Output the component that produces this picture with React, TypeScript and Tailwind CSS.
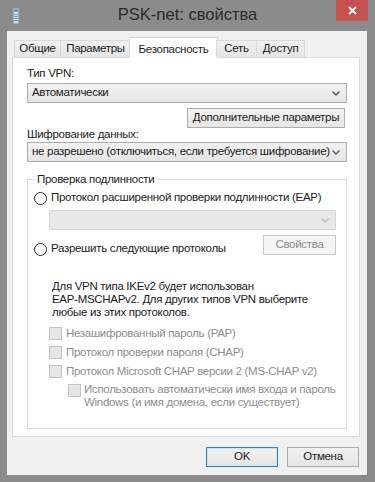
import type { ReactNode } from 'react'

const tabs = [
  { name: 'Общие', w: 'w-[47px]' },
  { name: 'Параметры', w: 'w-[71px]' },
  { name: 'Безопасность', w: 'w-[89px]' },
  { name: 'Сеть', w: 'w-[41px]' },
  { name: 'Доступ', w: 'w-[49px]' },
]

function Chevron({ muted = false }: { muted?: boolean }) {
  return (
    <svg width="8" height="5" viewBox="0 0 8 5" className="shrink-0">
      <path d="M0.5 0.5 L4 4 L7.5 0.5" fill="none" stroke={muted ? '#b8b8b8' : '#555'} strokeWidth="1.4" />
    </svg>
  )
}

function Combo({ children, className = '' }: { children?: ReactNode; className?: string }) {
  return (
    <div
      className={`h-[20px] min-w-0 flex items-center justify-between pl-[4px] pr-[6px] border border-[#acacac] bg-gradient-to-b from-[#f2f2f2] to-[#e5e5e5] ${className}`}
    >
      <span className="whitespace-nowrap overflow-hidden">{children}</span>
      <Chevron />
    </div>
  )
}

function Btn({ children, className = '' }: { children: ReactNode; className?: string }) {
  return (
    <div
      className={`h-[20px] flex items-center justify-center border bg-gradient-to-b from-[#f2f2f2] to-[#e5e5e5] whitespace-nowrap ${className}`}
    >
      {children}
    </div>
  )
}

function Radio() {
  return <div className="w-[13px] h-[13px] rounded-full border border-[#333] bg-white shrink-0" />
}

function Check() {
  return <div className="w-[13px] h-[13px] border border-[#c4c4c4] bg-[#e6e6e6] shrink-0" />
}

export default function App() {
  return (
    <div className="w-[375px] h-[482px] bg-[#8b8b8b] flex flex-col font-['Liberation_Sans',sans-serif] text-[11.5px] tracking-[-0.3px] text-[#1b1b1b]">
      {/* Title bar */}
      <div className="h-[31px] shrink-0 flex items-start">
        <svg width="6" height="16" viewBox="0 0 6 16" className="ml-[13px] mt-[8px]">
          <rect x="0" y="0" width="6" height="16" fill="#c9dcec" />
          <rect x="0.5" y="0.5" width="5" height="15" fill="none" stroke="#9ab3c9" />
          <rect x="1" y="1.5" width="4" height="2" fill="#5f7d98" />
          <rect x="1" y="6" width="4" height="1" fill="#7e9bb5" />
          <rect x="1" y="8" width="4" height="1" fill="#7e9bb5" />
          <rect x="1" y="10" width="4" height="1" fill="#7e9bb5" />
          <rect x="1" y="12" width="4" height="1" fill="#7e9bb5" />
        </svg>
        <div className="flex-1 text-center text-[16.5px] tracking-normal leading-[31px] text-[#2b2b2b] -mt-[1px] pl-[20px]">PSK-net: свойства</div>
        <div className="w-[32px] h-[21px] bg-[#c75050] mr-[7px] flex items-center justify-center">
          <svg width="9" height="9" viewBox="0 0 9 9">
            <path d="M1 1 L8 8 M8 1 L1 8" stroke="#fff" strokeWidth="1.8" />
          </svg>
        </div>
      </div>

      {/* Client area */}
      <div className="flex-1 min-w-0 ml-[7px] mr-[8px] mb-[7px] bg-[#f0f0f0] flex flex-col pl-[5px] pr-[7px]">
        {/* Tabs */}
        <div className="flex items-end h-[26px] pl-[2px] relative z-10">
          {tabs.map(({ name, w }) =>
            name === 'Безопасность' ? (
              <div
                key={name}
                className={`${w} h-[21px] flex justify-center pt-[3px] bg-white border border-b-0 border-[#d9d9d9] -mb-px -ml-[2px] -mr-[1px]`}
              >
                {name}
              </div>
            ) : (
              <div
                key={name}
                className={`${w} h-[17px] flex items-center justify-center bg-gradient-to-b from-[#f0f0f0] to-[#e5e5e5] border border-b-0 border-[#d9d9d9] -ml-px first:ml-0`}
              >
                {name}
              </div>
            )
          )}
        </div>

        {/* Panel */}
        <div className="h-[380px] min-w-0 bg-white border border-[#d9d9d9] flex flex-col pl-[14px] pr-[12px]">
          <div className="leading-[15px] mt-[8px]">Тип VPN:</div>
          <Combo className="mt-[2px]">Автоматически</Combo>
          <div className="flex justify-end mt-[5px] pr-[2px]">
            <Btn className="w-[158px] border-[#acacac]">Дополнительные параметры</Btn>
          </div>
          <div className="leading-[12px]">Шифрование данных:</div>
          <Combo className="mt-[2px]">не разрешено (отключиться, если требуется шифрование)</Combo>

          <fieldset className="mt-[10px] h-[257px] min-w-0 border border-[#dcdcdc] pl-[6px] pr-[10px]">
            <legend className="ml-[1px] px-[2px] leading-[14px]">Проверка подлинности</legend>
            <div className="flex items-center gap-[4px] h-[16px] mt-[4px]">
              <Radio />
              <span>Протокол расширенной проверки подлинности (EAP)</span>
            </div>
            <div className="ml-[15px] mt-[4px] h-[20px] border border-[#d9d9d9] bg-[#e8e8e8] flex items-center justify-end pr-[6px]">
              <Chevron muted />
            </div>
            <div className="flex justify-between items-start mt-[5px]">
              <div className="flex items-center gap-[4px] h-[16px] mt-[6px]">
                <Radio />
                <span>Разрешить следующие протоколы</span>
              </div>
              <Btn className="w-[73px] border-[#c8c8c8] !bg-none bg-[#f4f4f4] text-[#8a8a8a]">Свойства</Btn>
            </div>

            <p className="ml-[18px] mt-[23px] leading-[13px] whitespace-nowrap">
              Для VPN типа IKEv2 будет использован
              <br />
              EAP-MSCHAPv2. Для других типов VPN выберите
              <br />
              любые из этих протоколов.
            </p>

            <div className="flex flex-col text-[#8d8d8d] mt-[5px]">
              <div className="flex items-center gap-[4px] h-[19px] ml-[15px]">
                <Check />
                <span>Незашифрованный пароль (PAP)</span>
              </div>
              <div className="flex items-center gap-[4px] h-[19px] ml-[15px]">
                <Check />
                <span>Протокол проверки пароля (CHAP)</span>
              </div>
              <div className="flex items-center gap-[4px] h-[19px] ml-[15px]">
                <Check />
                <span>Протокол Microsoft CHAP версии 2 (MS-CHAP v2)</span>
              </div>
              <div className="flex items-start gap-[3px] ml-[34px] mt-[3px]">
                <Check />
                <span className="leading-[13px] -mt-[1px] whitespace-nowrap">
                  Использовать автоматически имя входа и пароль
                  <br />
                  Windows (и имя домена, если существует)
                </span>
              </div>
            </div>
          </fieldset>
        </div>

        {/* Buttons */}
        <div className="flex justify-end gap-[9px] mt-[10px] pr-[1px]">
          <Btn className="w-[72px] border-[#3c7fb1] shadow-[inset_0_0_0_1px_#c4e5f6]">OK</Btn>
          <Btn className="w-[72px] border-[#acacac]">Отмена</Btn>
        </div>
      </div>
    </div>
  )
}
